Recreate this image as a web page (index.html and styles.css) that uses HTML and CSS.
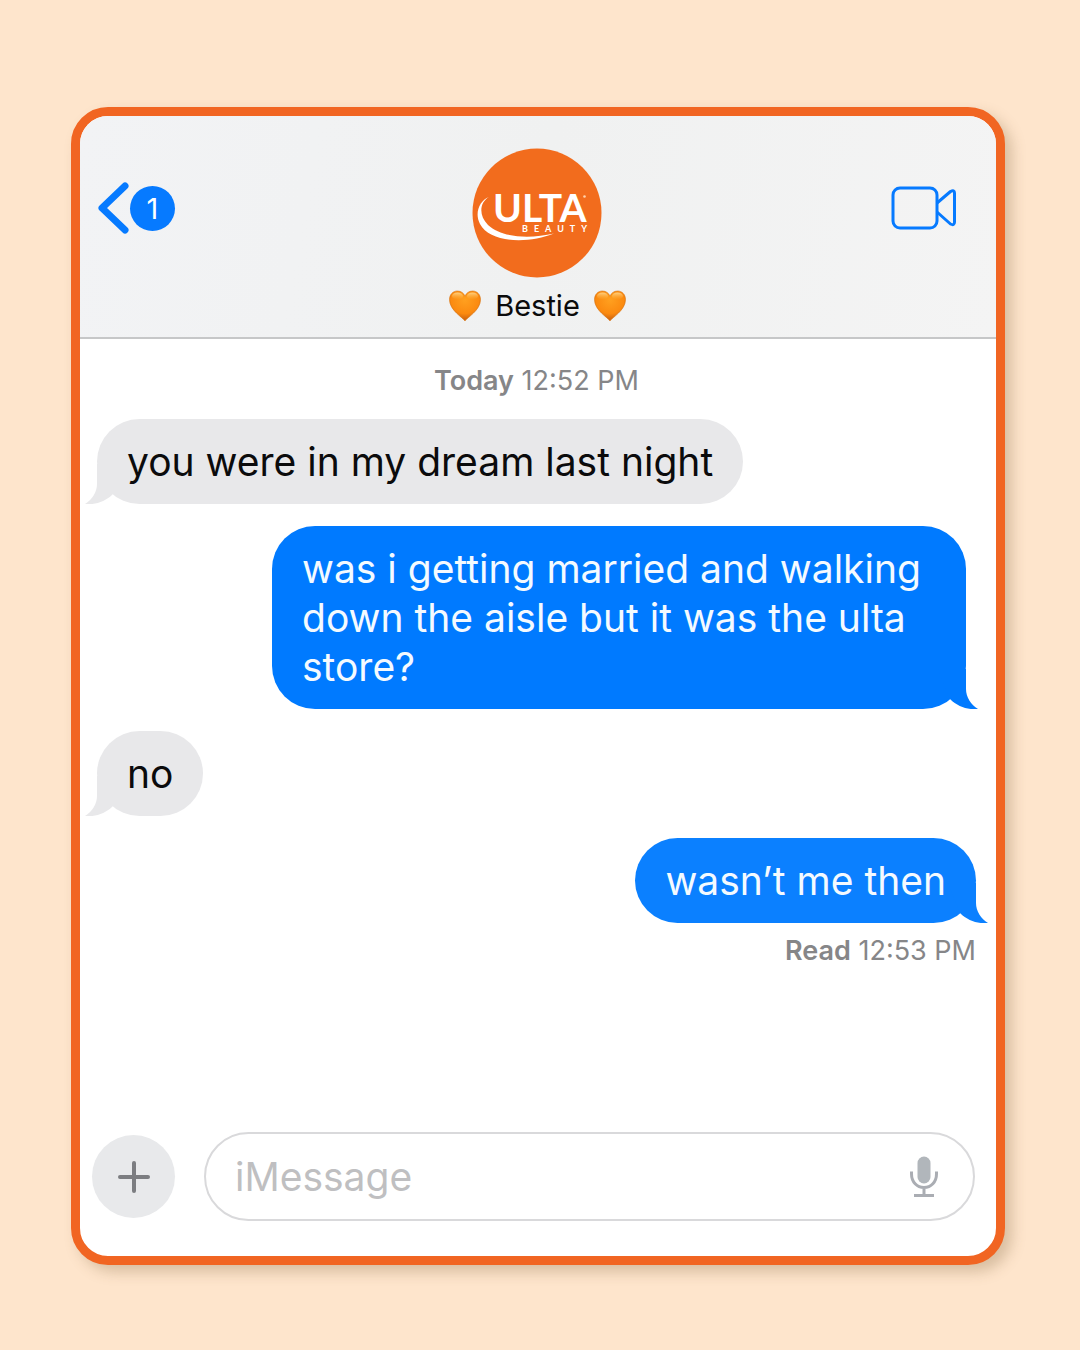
FILE: index.html
```html
<!DOCTYPE html>
<html lang="en">
<head>
<meta charset="utf-8">
<meta name="viewport" content="width=device-width, initial-scale=1">
<title>Bestie</title>
<link rel="stylesheet" href="styles.css">
</head>
<body>
<svg class="defs" aria-hidden="true">
  <defs>
    <radialGradient id="heart-fill" cx="50%" cy="30%" r="65%">
      <stop offset="0" stop-color="#ffa01f"/>
      <stop offset="0.7" stop-color="#fb8a10"/>
      <stop offset="1" stop-color="#cf6410"/>
    </radialGradient>
    <linearGradient id="heart-shine" x1="0" y1="0" x2="0" y2="1">
      <stop offset="0" stop-color="#ffe3a0" stop-opacity="0.8"/>
      <stop offset="1" stop-color="#ffb84a" stop-opacity="0"/>
    </linearGradient>
    <symbol id="heart" viewBox="0 0 32 32">
      <path fill="url(#heart-fill)" stroke="#d9730f" stroke-width="0.6" d="M16 31C14 27.500 0.500 20.500 0.500 9.500C0.500 4.500 4 1 8.300 1C12 1 14.800 3 16 6.200C17.200 3 20 1 23.700 1C28 1 31.500 4.500 31.500 9.500C31.500 20.500 18 27.500 16 31Z"/>
      <ellipse cx="8.500" cy="6" rx="5.500" ry="3.600" fill="url(#heart-shine)"/>
      <ellipse cx="23.500" cy="6" rx="5.500" ry="3.600" fill="url(#heart-shine)"/>
    </symbol>
    <symbol id="tail" viewBox="0 0 40 40">
      <path fill="currentColor" d="M0 0H28V20C28 28 33 36 40 40C30 41 20 38 12 30Z"/>
    </symbol>
  </defs>
</svg>
<main class="phone">
  <header class="header">
    <button class="back" type="button" aria-label="Back, 1 unread">
      <svg class="chevron" viewBox="0 0 32 52" aria-hidden="true"><path d="M27 4L4 26L27 48" fill="none" stroke="currentColor" stroke-width="7" stroke-linecap="round" stroke-linejoin="round"/></svg>
      <span class="unread">1</span>
    </button>
    <div class="contact">
      <svg class="avatar" viewBox="0 0 130 130" role="img" aria-label="Ulta Beauty">
        <circle cx="65" cy="65" r="64.500" fill="#f26c1d"/>
        <path fill="#fff" d="M17 49C8 52 2 65 8 76C18 95 56 96 82 85.500C58 91 30 90 16 77C6 67 8 54 17 49Z"/>
        <text class="logo-name" x="21" y="74">ULTA</text>
        <circle cx="112.500" cy="48.500" r="1.300" fill="#ffd3ac"/>
        <text class="logo-sub" x="50" y="84">BEAUTY</text>
      </svg>
      <h1 class="name">
        <svg class="heart" aria-hidden="true"><use href="#heart"/></svg>
        <span>Bestie</span>
        <svg class="heart" aria-hidden="true"><use href="#heart"/></svg>
      </h1>
    </div>
    <button class="video" type="button" aria-label="Video call">
      <svg viewBox="0 0 66 44" aria-hidden="true"><g fill="none" stroke="currentColor" stroke-width="3" stroke-linejoin="round"><rect x="2" y="2" width="44" height="40" rx="7"/><path d="M46 17L59.500 5.500Q63.500 3.500 63.500 7V36Q63.500 40 59.500 38L46 26"/></g></svg>
    </button>
  </header>

  <section class="thread" aria-label="Messages">
    <p class="stamp"><b>Today</b> 12:52 PM</p>
    <p class="bubble received">you were in my dream last night<svg class="tail" aria-hidden="true"><use href="#tail"/></svg></p>
    <p class="bubble sent long">was i getting married and walking down the aisle but it was the ulta store?<svg class="tail" aria-hidden="true"><use href="#tail"/></svg></p>
    <p class="bubble received">no<svg class="tail" aria-hidden="true"><use href="#tail"/></svg></p>
    <p class="bubble sent latest">wasn’t me then<svg class="tail" aria-hidden="true"><use href="#tail"/></svg></p>
    <p class="stamp receipt"><b>Read</b> 12:53 PM</p>
  </section>

  <form class="composer">
    <button class="add" type="button" aria-label="Add attachment">
      <svg viewBox="0 0 32 32" aria-hidden="true"><path d="M16 2V30M2 16H30" stroke="currentColor" stroke-width="4" stroke-linecap="round"/></svg>
    </button>
    <div class="field">
      <input class="input" type="text" aria-label="Message" placeholder="iMessage">
      <button class="mic" type="button" aria-label="Dictate">
        <svg viewBox="0 0 30 42" aria-hidden="true"><rect x="8.500" y="0.500" width="13" height="27" rx="6.500" fill="#b1b6bb"/><path d="M2.500 15.500V18C2.500 26 8 31.500 15 31.500S27.500 26 27.500 18V15.500M15 31.500V39M5 39.500H25" fill="none" stroke="#aaadb3" stroke-width="3"/></svg>
      </button>
    </div>
  </form>
</main>
</body>
</html>
```
FILE: styles.css
```css
* { box-sizing: border-box; }

body {
  margin: 0;
  min-height: 100vh;
  padding: 107px 75px 85px 71px;
  display: flex;
  background: #fee5cc;
  font-family: Inter, "Liberation Sans", sans-serif;
  color: #0b0b0c;
}

.defs { position: absolute; width: 0; height: 0; }

button {
  padding: 0;
  border: 0;
  background: none;
  color: #067aff;
  font: inherit;
  cursor: pointer;
}

svg { display: block; }

p, h1 { margin: 0; }

.phone {
  flex: 1;
  min-width: 0;
  display: flex;
  flex-direction: column;
  border: 9px solid #f16522;
  border-radius: 37px;
  background: #fff;
  box-shadow: 7px 7px 14px rgba(120, 90, 50, 0.28);
}

.header {
  display: grid;
  grid-template-columns: 1fr auto 1fr;
  align-items: start;
  height: 223px;
  padding: 32px 39px 0 18px;
  border-bottom: 2px solid #c6c7c8;
  border-radius: 28px 28px 0 0;
  background: linear-gradient(100deg, #f2f3f5, #f0f1f1 50%, #f4f4f4);
}

.back {
  display: flex;
  align-items: center;
  margin-top: 34px;
  justify-self: start;
}

.chevron { width: 32px; height: 52px; }

.unread {
  width: 45px;
  height: 45px;
  border-radius: 50%;
  background: #067aff;
  color: #fff;
  font-size: 29px;
  line-height: 45px;
}

.contact {
  display: flex;
  flex-direction: column;
  align-items: center;
  gap: 10px;
  margin-left: 20px;
}

.avatar { width: 130px; height: 130px; }

.logo-name { font: 700 39px Lato, sans-serif; fill: #fff; }

.logo-sub { font: 700 9px Lato, sans-serif; letter-spacing: 6px; fill: #fff; }

.name {
  display: flex;
  align-items: center;
  gap: 14px;
  font-size: 29px;
  line-height: 36px;
  font-weight: 400;
}

.heart { width: 32px; height: 32px; }

.video { justify-self: end; margin-top: 38px; }

.video svg { width: 66px; height: 44px; }

.thread {
  flex: 1;
  display: flex;
  flex-direction: column;
  align-items: flex-start;
  gap: 22px;
  padding: 26px 20px 24px 17px;
}

.stamp {
  align-self: center;
  font-size: 27px;
  line-height: 32px;
  color: #868688;
}

.stamp b { font-weight: 600; }

.bubble {
  position: relative;
  padding: 18px 30px;
  border-radius: 43px;
  font-size: 39px;
  line-height: 49px;
}

.received { background: #e8e8ea; color: #0b0b0c; }

.sent { align-self: flex-end; background: #007aff; color: #f4faff; }

.long { max-width: 694px; margin-right: 10px; }

.latest { background: #0b80ff; }

.tail {
  position: absolute;
  right: -12px;
  bottom: 0;
  width: 40px;
  height: 40px;
  color: #007aff;
}

.latest .tail { color: #0b80ff; }

.received .tail {
  right: auto;
  left: -12px;
  color: #e8e8ea;
  transform: scaleX(-1);
}

.receipt { align-self: flex-end; margin-top: -10px; }

.composer {
  display: flex;
  align-items: center;
  gap: 29px;
  padding: 0 21px 35px 12px;
}

.add {
  display: grid;
  place-items: center;
  width: 83px;
  height: 83px;
  border-radius: 50%;
  background: #e8e9eb;
  color: #7c7d81;
}

.add svg { width: 32px; height: 32px; }

.field {
  flex: 1;
  display: flex;
  align-items: center;
  height: 89px;
  padding: 0 34px 0 29px;
  border: 2px solid #d9d9db;
  border-radius: 45px;
}

.input {
  flex: 1;
  min-width: 0;
  padding: 0;
  border: 0;
  outline: 0;
  background: none;
  font: inherit;
  font-size: 39px;
  line-height: 49px;
}

.input::placeholder { color: #bfbfc1; opacity: 1; }

.mic svg { width: 30px; height: 42px; }
```
